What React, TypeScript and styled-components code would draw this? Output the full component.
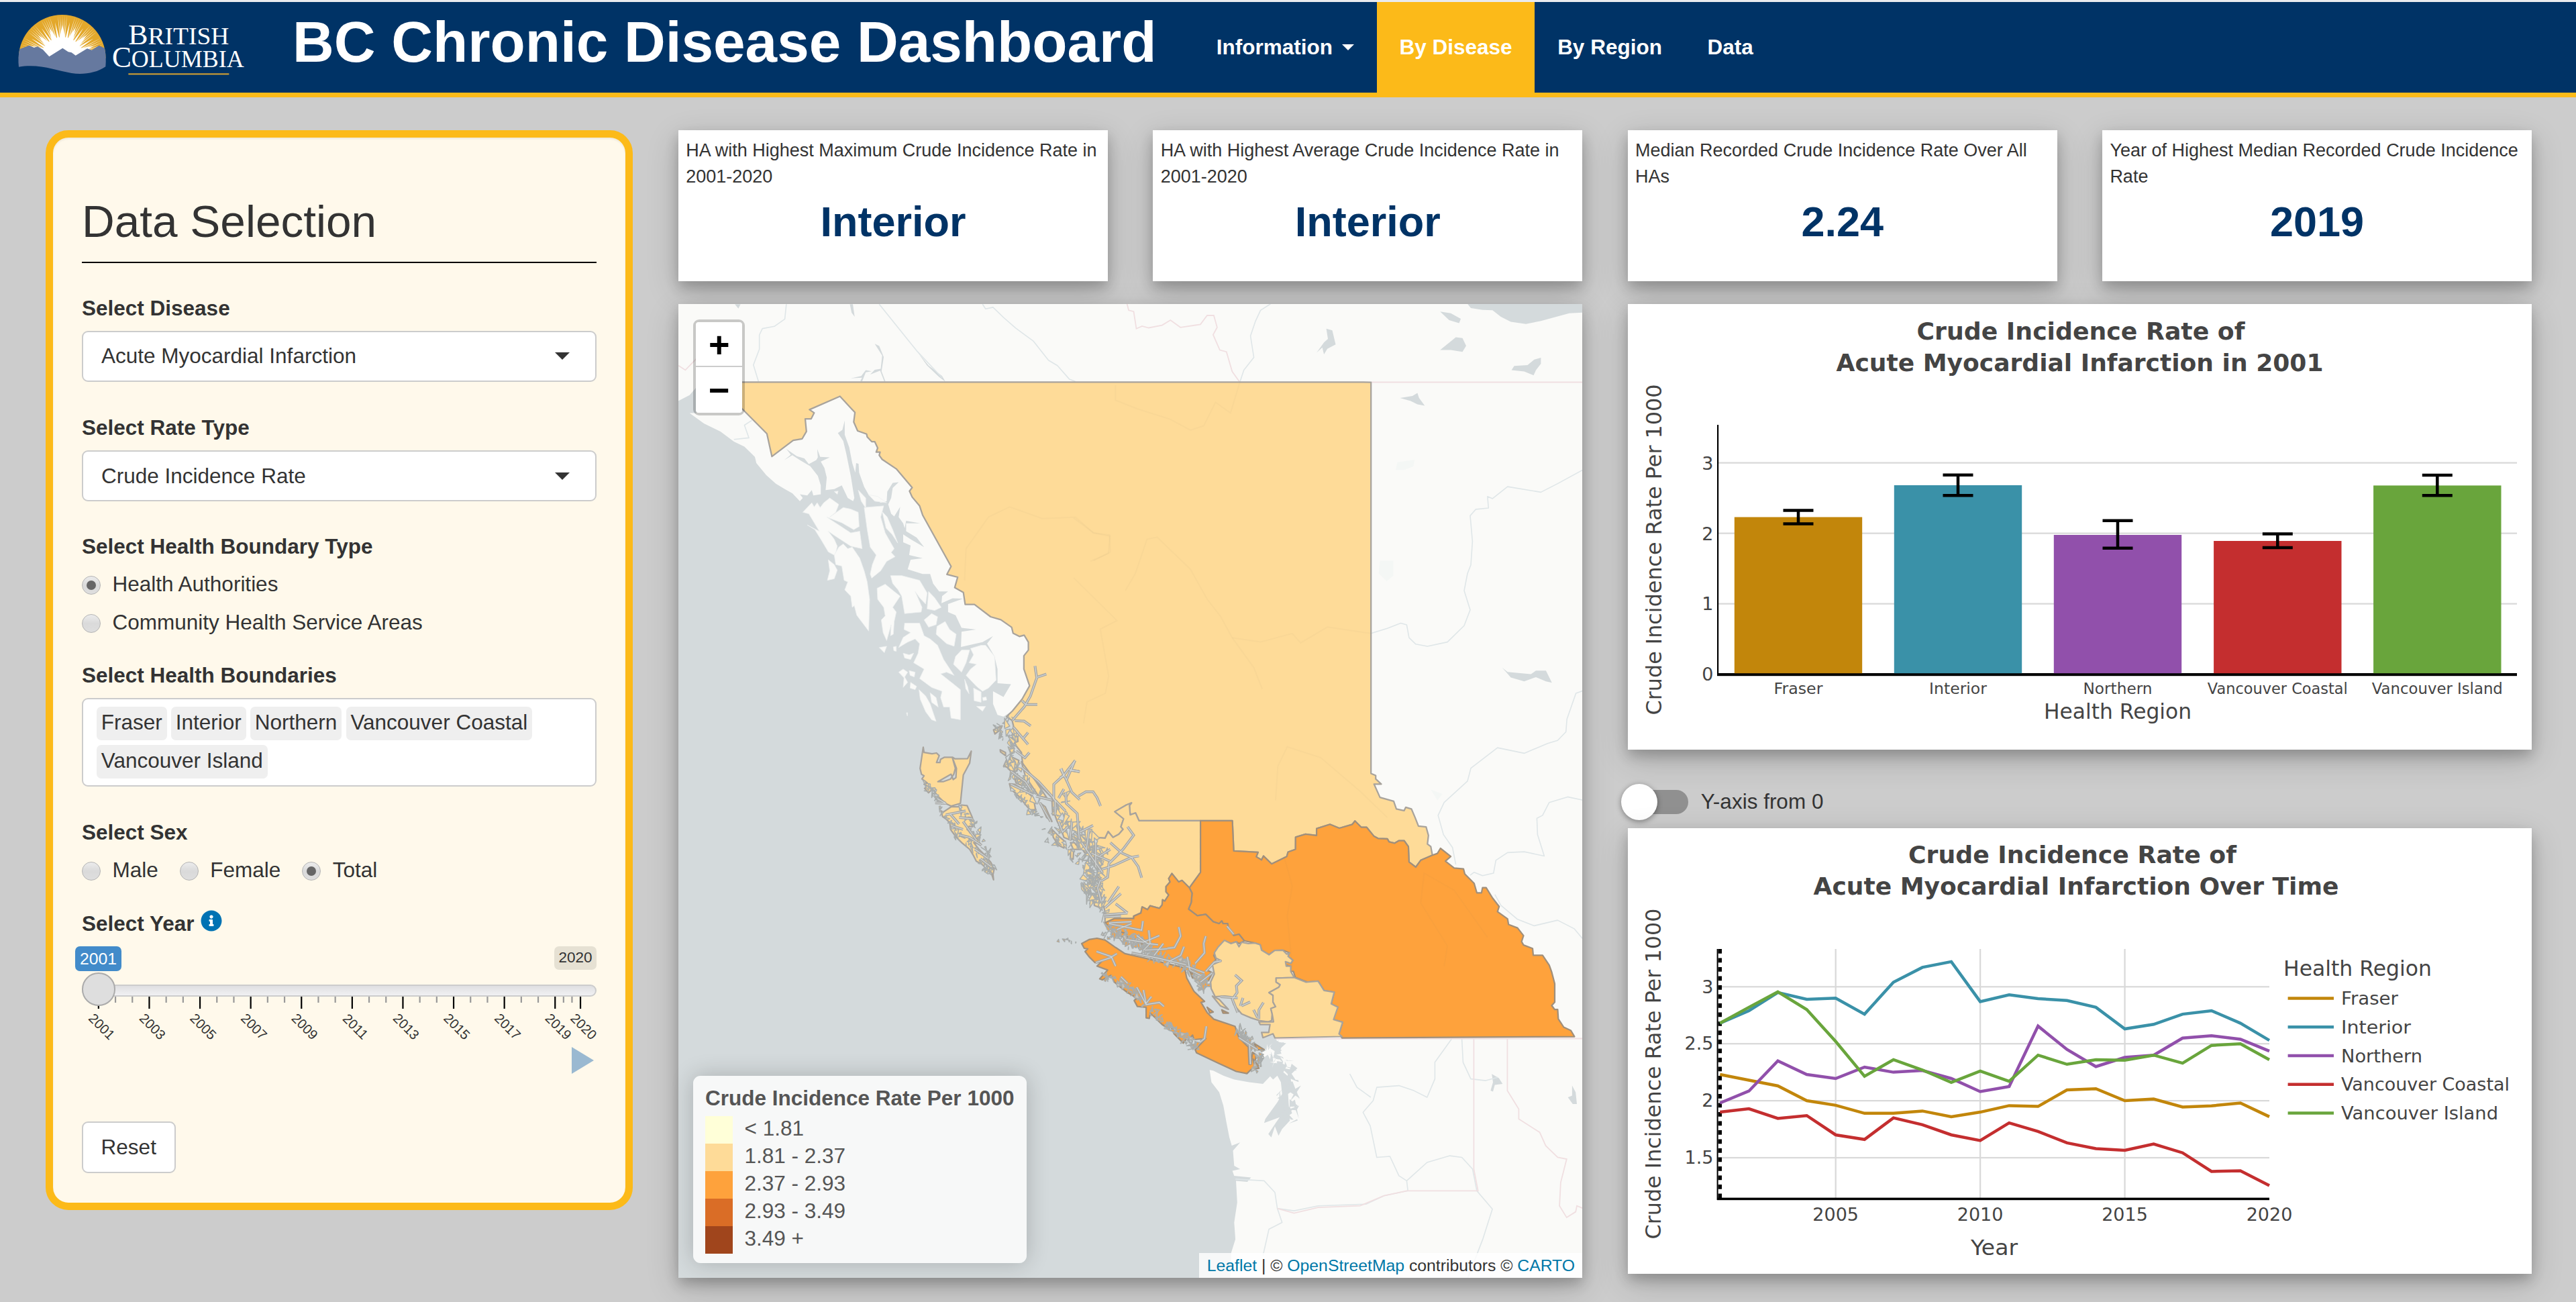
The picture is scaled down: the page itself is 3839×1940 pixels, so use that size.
import React from 'react';
import styled, { createGlobalStyle } from 'styled-components';
import { FaInfoCircle } from 'react-icons/fa';

const GlobalStyle = createGlobalStyle`
  * { box-sizing: border-box; }
  html, body { margin: 0; padding: 0; }
  body {
    background: #cccccc;
    color: #333333;
    font-family: "Liberation Sans", Arial, sans-serif;
    font-size: 31.5px;
    line-height: 45px;
    overflow: hidden;
  }
`;

const Page = styled.div`
  width: 3839px;
  height: 1940px;
  overflow: hidden;
  background: #cccccc;
`;

/* ---------- header ---------- */

const Header = styled.header`
  display: flex;
  height: 145px;
  border-top: 3px solid #e9ebee;
  border-bottom: 7px solid #fcba19;
  background: #003366;
  color: #ffffff;
`;

const LogoBox = styled.div`
  width: 400px;
  height: 135px;
`;

const Title = styled.h1`
  margin: 0;
  width: 1379px;
  padding-left: 36px;
  font-size: 85.5px;
  line-height: 120px;
  font-weight: 700;
  white-space: nowrap;
`;

const Nav = styled.nav`
  display: flex;
  height: 135px;
`;

const NavLink = styled.a<{ $active?: boolean }>`
  display: flex;
  align-items: center;
  gap: 14px;
  padding: 0 33.75px;
  font-weight: 700;
  white-space: nowrap;
  background: ${(p) => (p.$active ? '#fcba19' : 'transparent')};
`;

const Caret = styled.span<{ $size: number; $color: string }>`
  width: 0;
  height: 0;
  border-left: ${(p) => p.$size}px solid transparent;
  border-right: ${(p) => p.$size}px solid transparent;
  border-top: ${(p) => p.$size}px solid ${(p) => p.$color};
`;

/* ---------- layout ---------- */

const Body = styled.div`
  display: flex;
  align-items: flex-start;
  gap: 68px;
  padding: 49px 66px 0 68px;
`;

const Main = styled.main`
  flex: 0 0 2762px;
  display: flex;
  flex-direction: column;
  gap: 34px;
`;

const KpiRow = styled.div`
  display: grid;
  grid-template-columns: repeat(4, 1fr);
  gap: 67.5px;
`;

const LowerRow = styled.div`
  display: grid;
  grid-template-columns: 1fr 1fr;
  gap: 67.5px;
  align-items: start;
`;

const Card = styled.section<{ $height: number }>`
  position: relative;
  height: ${(p) => p.$height}px;
  background: #ffffff;
  box-shadow: 0 9px 18px rgba(0, 0, 0, 0.2), 0 13.5px 45px rgba(0, 0, 0, 0.19);
  & > svg { display: block; width: 100%; height: 100%; }
`;

const KpiCard = styled(Card)`
  padding: 11.25px;
`;

const KpiLabel = styled.div`
  height: 88px;
  font-size: 27px;
  line-height: 38.57px;
`;

const KpiValue = styled.div`
  color: #003366;
  font-size: 63px;
  line-height: 75px;
  font-weight: 700;
  text-align: center;
`;

const Column = styled.div`
  display: flex;
  flex-direction: column;
`;

/* ---------- sidebar ---------- */

const Sidebar = styled.aside`
  flex: 0 0 875px;
  height: 1609px;
  border: 11px solid #fcba19;
  border-radius: 34px;
  background: #fff9eb;
  box-shadow: inset 0 2px 3px rgba(0, 0, 0, 0.07);
  padding: 88px 43px 0;
`;

const SideTitle = styled.h2`
  margin: 0 0 23px;
  font-size: 67.5px;
  line-height: 74px;
  font-weight: 400;
`;

const Rule = styled.div`
  height: 2px;
  background: #000000;
`;

const Field = styled.div<{ $top: number }>`
  padding-top: ${(p) => p.$top}px;
`;

const FieldLabel = styled.div`
  display: flex;
  height: 45px;
  font-weight: 700;
  margin-bottom: 11.25px;
`;

const SelectBox = styled.div`
  display: flex;
  align-items: center;
  justify-content: space-between;
  height: 76px;
  padding: 0 38px 0 27px;
  border: 2px solid #cccccc;
  border-radius: 9px;
  background: #ffffff;
`;

const RadioStack = styled.div`
  display: flex;
  flex-direction: column;
  gap: 12px;
`;

const RadioRow = styled.div`
  display: flex;
  gap: 32px;
`;

const RadioLabel = styled.label`
  display: flex;
  align-items: center;
  gap: 17.5px;
`;

const RadioDot = styled.span<{ $on?: boolean }>`
  display: flex;
  align-items: center;
  justify-content: center;
  width: 28px;
  height: 28px;
  margin-top: 2px;
  border-radius: 50%;
  border: 1px solid #b4b4b4;
  background: linear-gradient(#ececec, #dadada 50%, #dedede);
  &::after {
    content: "";
    width: 14px;
    height: 14px;
    border-radius: 50%;
    background: ${(p) => (p.$on ? '#666666' : 'transparent')};
  }
`;

const ChipBox = styled.div`
  display: flex;
  flex-wrap: wrap;
  align-content: flex-start;
  gap: 6.5px;
  height: 132px;
  padding: 11px 20px;
  border: 2px solid #cccccc;
  border-radius: 9px;
  background: #ffffff;
`;

const Chip = styled.span`
  height: 50px;
  padding: 1px 6.75px 0;
  border-radius: 7px;
  background: #efefef;
`;

const InfoIcon = styled(FaInfoCircle)`
  width: 32px;
  height: 32px;
  margin: 2px 0 0 9px;
  color: #0072b3;
  background: radial-gradient(circle, #ffffff 50%, transparent 51%);
`;

const SliderHead = styled.div`
  display: flex;
  justify-content: space-between;
  align-items: flex-start;
  height: 57px;
`;

const SliderNow = styled.span`
  margin-left: -10px;
  padding: 0 7px;
  border-radius: 7px;
  background: #428bca;
  color: #ffffff;
  font-size: 24.75px;
  line-height: 37px;
`;

const SliderMax = styled.span`
  padding: 0 6.5px;
  border-radius: 7px;
  background: #e6e1d3;
  font-size: 22.5px;
  line-height: 34.5px;
`;

const Track = styled.div`
  position: relative;
  height: 18px;
  border: 2px solid #cccccc;
  border-radius: 9px;
  background: linear-gradient(#dfdfe1, #f1f1f3);
`;

const Handle = styled.span`
  position: absolute;
  left: -2px;
  top: -20px;
  width: 49.5px;
  height: 49.5px;
  border: 2px solid #ababab;
  border-radius: 50%;
  background: #dedede;
`;

const Scale = styled.svg`
  display: block;
  width: 767px;
  height: 75px;
  overflow: visible;
`;

const PlayRow = styled.div`
  display: flex;
  justify-content: flex-end;
  padding-right: 4px;
`;

const Play = styled.span`
  border-left: 33px solid #9ab9d1;
  border-top: 20px solid transparent;
  border-bottom: 20px solid transparent;
`;

const ResetButton = styled.button`
  margin-top: 71px;
  width: 139.5px;
  height: 76.5px;
  border: 2px solid #cccccc;
  border-radius: 9px;
  background: #ffffff;
  color: #333333;
  font: 400 31.5px "Liberation Sans", Arial, sans-serif;
`;

/* ---------- map ---------- */

const ZoomControl = styled.div`
  position: absolute;
  left: 22px;
  top: 22.5px;
  width: 76.5px;
  border: 4.5px solid rgba(0, 0, 0, 0.2);
  border-radius: 9px;
  background-clip: padding-box;
`;

const ZoomKey = styled.div<{ $last?: boolean }>`
  height: 67.5px;
  background: #ffffff;
  border-bottom: ${(p) => (p.$last ? 'none' : '2px solid #cccccc')};
  border-radius: ${(p) => (p.$last ? '0 0 4px 4px' : '4px 4px 0 0')};
  color: #000000;
  font-size: 54px;
  line-height: ${(p) => (p.$last ? 68 : 66)}px;
  padding-left: 1px;
  font-weight: 700;
  text-align: center;
`;

const Legend = styled.div`
  position: absolute;
  left: 22px;
  bottom: 22px;
  width: 497px;
  height: 279px;
  padding: 11px 18px;
  border-radius: 11px;
  background: rgba(255, 255, 255, 0.8);
  box-shadow: 0 0 34px rgba(0, 0, 0, 0.2);
  color: #555555;
`;

const LegendTitle = styled.div`
  height: 49px;
  font-weight: 700;
  white-space: nowrap;
`;

const LegendRow = styled.div`
  display: flex;
  gap: 18px;
  height: 41px;
  line-height: 37px;
`;

const Swatch = styled.span<{ $color: string }>`
  width: 40.5px;
  height: 41px;
  background: ${(p) => p.$color};
`;

const Attribution = styled.div`
  position: absolute;
  right: 0;
  bottom: 0;
  height: 37px;
  padding: 0 11.25px;
  background: rgba(255, 255, 255, 0.8);
  font-size: 24.75px;
  line-height: 37px;
  white-space: nowrap;
`;

const MapLink = styled.a`
  color: #0078a8;
`;

/* ---------- toggle ---------- */

const ToggleRow = styled.div`
  display: flex;
  align-items: center;
  height: 117px;
  padding-top: 38px;
`;

const ToggleTrack = styled.span`
  display: flex;
  align-items: center;
  width: 90px;
  height: 36px;
  margin-right: 19px;
  border-radius: 18px;
  background: #909090;
`;

const ToggleKnob = styled.span`
  flex: none;
  width: 54px;
  height: 54px;
  margin-left: -9.5px;
  border-radius: 50%;
  background: #ffffff;
  box-shadow: 0 2px 9px rgba(0, 0, 0, 0.4);
`;

/* ---------- logo ---------- */

const polar = (r: number, deg: number) => {
  const a = (deg * Math.PI) / 180;
  return `${(279 + r * Math.cos(a)).toFixed(1)},${(262 - r * Math.sin(a)).toFixed(1)}`;
};
const wedge = (deg: number, half: number, r0: number, r1: number) =>
  `${polar(r0, deg - half)} ${polar(r1, deg)} ${polar(r0, deg + half)}`;

const FANS = [22, 44, 67, 90, 113, 136, 158];
const SPIKES = [33, 55.5, 78.5, 101.5, 124.5, 147];

const Logo = () => (
  <svg width="400" height="135" viewBox="0 9 1200 405">
    <defs>
      <clipPath id="dome"><path d="M83,261 A195,195 0 0 1 473,261 Z" /></clipPath>
    </defs>
    <g clipPath="url(#dome)">
      <rect x="80" y="60" width="400" height="205" fill="#e3a82b" />
      <circle cx="279" cy="262" r="96" fill="#fff" />
      {FANS.map((f) => (
        <g key={f}>
          <polygon points={wedge(f, 8, 92, 150)} fill="#fff" />
          {[-6, -3, 0, 3, 6].map((d) => (
            <polygon key={d} points={wedge(f + d, 1.7, 92, 195)} fill="#fff" opacity="0.8" />
          ))}
        </g>
      ))}
      {SPIKES.map((s) => <polygon key={s} points={wedge(s, 3, 92, 166)} fill="#fff" />)}
    </g>
    <path d="M88,220 L130,203 L152,213 L168,208 L192,222 L220,253 L280,215 L305,232 L320,235 L338,248 L390,217 L410,224 L443,203 L468,216 Q476,256 472,298 C430,328 370,334 320,327 C250,316 180,284 84,299 Q79,256 88,220 Z" fill="#66799f" />
    <g fill="#fff" fontFamily='"Liberation Serif", serif'>
      <text x="574" y="199" textLength="450" lengthAdjust="spacingAndGlyphs" fontSize="106"><tspan fontSize="124">B</tspan>RITISH</text>
      <text x="501" y="299" textLength="590" lengthAdjust="spacingAndGlyphs" fontSize="108"><tspan fontSize="130">C</tspan>OLUMBIA</text>
    </g>
    <rect x="574" y="328" width="450" height="6" fill="#d9a331" />
  </svg>
);

/* ---------- map geometry ---------- */

type Sheet = [number, number, number, number];

const A: Sheet = [1000, 440, 2.24, 2.1189];
const B: Sheet = [1600, 440, 2.0103, 1.568];
const C: Sheet = [1000, 1150, 1.12, 2.0103];
const D: Sheet = [1370, 1050, 2.529, 2.529];

const on = (s: Sheet, list: string) =>
  list.trim().split(/\s+/).map((p) => {
    const [x, y] = p.split(',').map(Number);
    return `${(s[0] + x / s[2]).toFixed(1)},${(s[1] + y / s[3]).toFixed(1)}`;
  }).join(' ');

const ALASKA_COAST = on(A, `25,333 62,315 85,290 85,372 62,372 110,405 165,430 210,462 245,478 280,510 285,530 318,568 350,595 380,612 405,625
 430,650 440,640 430,628 455,632 470,615 475,632 500,628 500,600 490,570 465,540 430,520 405,505 378,520 400,503 385,485 420,508 445,515 460,533 485,520 490,512
 488,485 498,510 530,512 500,525 512,545 520,575 516,615 545,612 570,600 590,640 608,650 612,640 600,570 585,500 575,460 557,435 572,425 580,395 580,440
 595,480 605,530 615,560 618,530 626,532 628,560 645,605 660,630 700,655 720,650 722,620 740,592 760,590 740,608 735,640 725,660 735,690
 745,698 765,668 760,700 775,720 780,735 785,712 832,720 785,720 785,745 820,765 845,795 800,770 775,755 775,780 800,790 795,820 840,830 800,835 790,865 840,880 865,880 875,910 895,935
 925,935 905,950 903,972 940,957 975,958 925,975 925,1000 950,1010 970,1050 1018,1055 970,1062 968,1110 1040,1095 1075,1076 1055,1100
 1080,1140 1090,1180 1090,1225 1135,1228 1110,1268 1075,1250 1075,1290 1090,1325 1110,1330 1140,1312`);
const US_COAST = on(C, `1030,640 1010,800 1020,850 1028,880 1022,900 1032,915 1030,940 1042,950 1030,965 1033,1045 1020,1070 1014,1090 1008,1062 1002,1095 997,1085 1010,1050 1016,1035 990,1052
 992,1040 1012,990 1020,965 1018,930 1012,910 1005,922 1000,912 988,935 965,930 940,922 922,910 905,895 899,893 902,930 915,960 922,1000 927,1050 932,1095 936,1120 950,1110
 938,1135 940,1180 950,1190 937,1195 940,1210 968,1215 962,1228 943,1225 945,1290 940,1350 942,1400 935,1441 933,1530 0,1530`);
const OCEAN = `${ALASKA_COAST} ${on(D, '420,100 700,340 1000,700 1300,1000')} ${US_COAST} 1000,1900 1000,590`;

const ISLANDS = [
  '440,685 470,655 478,668 488,655 498,670 510,655 530,640 560,660 550,685 530,700 575,670 600,675 625,685 628,730 610,740 570,718 520,700 600,750 630,745 638,800 600,792 545,758 525,745 545,770 555,792 548,822 525,810 500,770 480,740 455,725 495,745 460,690',
  '560,795 575,785 590,800 605,795 630,830 645,870 655,905 663,960 660,1060 640,1035 620,1010 612,980 605,985 600,950 580,930 590,905 578,900 570,855 550,850 545,820',
  '525,835 545,850 555,868 545,895 522,900 530,870',
  '645,670 710,665 700,700 715,750 745,800 735,812 748,825 720,840 700,870 670,893 665,880 672,850 685,820 665,795 655,740',
  '705,683 722,700 740,740 757,782 738,755 718,735',
  '733,885 770,885 830,900 855,940 850,975 830,955 815,935 838,985 835,1000 780,1005 770,950 758,930 740,910',
  '688,925 715,912 745,935 765,950 740,985 752,1000 745,1030 742,1070 733,1075 735,1040 720,1090 708,1065 702,1025 715,1012 710,985 690,960',
  '860,935 880,955 902,985 880,995 855,990',
  '845,1025 870,1005 890,1015 885,1040 860,1048',
  '888,1045 915,1030 930,1055 952,1070 945,1108 920,1100 885,1070',
  '780,1035 830,1035 845,1075 865,1085 890,1105 910,1150 945,1200 920,1190 900,1195 940,1225 966,1245 966,1340 935,1335 930,1300 910,1300 900,1270 905,1250 870,1238 830,1210 845,1180 810,1160 825,1130 830,1100 815,1085 790,1095 760,1112 775,1080 800,1065 778,1055',
  '828,1245 850,1265 865,1290 885,1345 870,1340 850,1315 832,1275',
  '775,1130 795,1135 810,1130 800,1150 780,1145',
  '760,1190 775,1180 790,1190 780,1205 790,1222 775,1238 778,1208',
  '795,1185 815,1190 812,1205 798,1200', '800,1222 820,1235 815,1245 798,1240', '865,1255 885,1270 892,1300 870,1285',
  '985,1200 1000,1180 1020,1165 995,1160 1010,1135 1000,1115 1035,1105 1050,1105 1080,1140 1085,1215 1060,1240 1040,1250 1020,1235',
  '980,1212 990,1235 995,1258 984,1242', '1010,1240 1035,1252 1035,1285 1012,1280', '1040,1270 1052,1268 1054,1278 1042,1280', '1020,1298 1050,1298 1040,1313',
  '950,1140 970,1120 997,1120 985,1160 970,1190 943,1165',
  '625,615 650,640 650,672 635,650', '660,630 690,635 720,655 680,650', '695,1112 720,1108 712,1128', '742,1110 752,1108 752,1124 744,1122', '786,1318 790,1318 789,1328', '545,620 558,618 555,628',
].map((s) => on(A, s));

const N_EDGE = on(D, '660,500 700,503 712,478 730,500 752,488 768,470 760,460 770,430 737,403 780,378 800,370 792,380 795,415 815,408 828,437 1060,437');
const N_EAST = on(D, '1180,437 1185,551 1277,556 1270,573 1290,585 1297,570 1328,600 1385,572 1390,555 1418,545');
const ROCKY = on(B, '665,1266 695,1259 728,1262 728,1246 768,1236 796,1245 835,1236 843,1228 862,1243 878,1243 900,1264 912,1269 940,1270 945,1277 962,1280 975,1274 990,1274 1003,1288 1005,1324 1025,1336 1040,1320');

const reverse = (pts: string) => pts.split(' ').reverse().join(' ');

const NORTHERN = [
  on(A, `149,274 236,357 320,437 337,509 408,458 438,453 452,430 448,390 468,390 478,371 462,361 564,319 614,370 610,400 623,428 653,438
 655,447 670,462 680,462 690,482 685,495 698,495 695,505 705,518 752,548 805,607 796,618 805,637 830,665 840,694 935,856 921,881 957,890
 947,923 976,938 982,976 1013,976 1067,1015 1101,1024 1137,1048 1142,1067 1163,1077 1179,1073 1193,1095 1193,1120 1178,1138 1178,1180
 1197,1233 1172,1275 1140,1312 1120,1330`),
  on(D, '329,45 350,60 355,80 350,120 365,155 385,180 390,225 440,290 500,350 505,400 520,440 535,470 545,500 570,510 590,500 605,530 625,560 660,530'),
  N_EDGE, N_EAST, ROCKY,
  on(B, '1075,1308 1070,1288 1060,1282 1063,1262 1056,1242 1033,1240 1023,1220 1012,1200 995,1196 990,1204 967,1200 959,1182 918,1173 900,1142 922,1142 905,1130 905,1122 891,1117 891,203'),
].join(' ');

const VC_TOP = on(D, '1018,690 990,662 978,668 952,636 940,655 945,668 930,685 930,705 940,717 925,740 917,735 915,755 905,767 870,758 860,772 840,762 835,785 808,797 808,806 735,806 700,822');
const VC_EAST = on(D, '1018,690 1028,710 1025,745 1015,770 1048,795 1080,790 1108,818 1130,825 1140,815 1145,825 1162,825 1165,840 1185,870 1205,865 1225,890');
const CENTRAL = [N_EDGE, on(D, '1060,632'), VC_TOP, on(D, '700,780 690,740 683,715 683,660 665,640 645,580 640,520')].join(' ');
const COASTAL = [VC_EAST, on(D, `1205,900 1195,893 1175,900 1150,890 1120,925 1110,945 1118,960 1085,1000 1105,1010 1090,1040 1060,1045 1040,1030 1005,985 940,965 900,955 870,925 835,905 800,890 750,865 720,840`), reverse(VC_TOP)].join(' ');
const INTERIOR = [
  on(D, '1060,437'), N_EAST, ROCKY,
  on(B, `1075,1308 1090,1304 1099,1292 1130,1311 1114,1322 1140,1338 1168,1340 1172,1352 1200,1374 1208,1396 1222,1396 1225,1384 1236,1384 1255,1408
 1275,1428 1270,1440 1300,1457 1303,1470 1330,1478 1348,1496 1342,1510 1348,1518 1375,1526 1377,1542 1405,1542 1425,1565`),
  on(C, '1470,600 1475,635 1475,690 1470,700 1475,712 1480,712 1481,740 1490,765 1502,775 1508,793 1120,797 1115,785 1121,750 1106,742 1106,720 1113,705 1102,695 1107,660 1090,655 1080,627 1062,630 1042,616'),
  on(D, '1410,1005 1398,1005 1400,985 1380,980 1380,968 1400,975 1408,963 1390,948 1395,935 1370,925 1340,926 1318,942 1290,925 1285,905 1265,898'),
  reverse(VC_EAST), on(D, '1060,632'),
].join(' ');
const LOWER_MAINLAND = on(D, `1150,888 1175,900 1195,893 1205,912 1215,895 1240,900 1265,898 1285,905 1290,925 1318,942 1340,926 1370,925 1385,940 1395,935 1390,948
 1408,963 1400,975 1380,968 1383,985 1400,985 1400,1005 1413,1028 1345,1030 1345,1045 1360,1055 1355,1065 1318,1085 1333,1095 1333,1120 1343,1138 1325,1145
 1330,1165 1328,1190 1315,1195 1280,1190 1250,1180 1215,1165 1185,1130 1175,1100 1150,1098 1115,1100 1100,1070 1098,1045 1112,1015 1105,980 1138,965 1118,955 1112,935 1125,915`);
const FRASER = [
  on(D, '1345,1030 1413,1028'),
  on(C, '1060,630 1080,627 1090,655 1107,660 1102,695 1113,705 1106,742 1121,750 1115,785 1120,793 1008,797'),
  on(D, '1333,1240 1295,1255 1290,1235 1317,1235 1322,1205 1285,1205 1280,1195 1335,1195 1330,1165 1325,1145 1343,1138 1333,1120 1333,1095 1318,1085 1355,1065 1360,1055 1345,1045'),
].join(' ');
const ISLAND = on(D, `612,900 640,885 670,880 700,887 740,915 775,938 850,955 1000,992 1008,1030 1035,1080 1075,1118 1062,1122 1085,1160 1110,1185 1190,1212 1205,1255 1240,1290 1243,1355 1250,1355 1256,1310
 1270,1320 1265,1345 1280,1370 1250,1375 1235,1390 1195,1382 1125,1350 1045,1312 1040,1300 1080,1258 1035,1262 1030,1245 1015,1262 1008,1258 995,1275 960,1240 950,1215 930,1215 915,1205 890,1180 870,1162
 867,1182 855,1180 855,1140 822,1137 810,1115 820,1105 785,1085 755,1062 735,1045 722,1020 690,1037 680,1033 710,1000 670,985 690,965 662,972 640,950 625,930 635,920 622,918`);
const HAIDA = [
  '15,160 18,180 48,185 65,182 75,192 65,218 78,218 80,206 95,198 125,198 135,204 182,203 196,175 190,220 166,265 155,372 120,382 98,372 70,345 50,318 35,332 20,315 32,308 18,300 30,295 10,280 18,268 8,262 3,240 12,180',
  '125,200 140,240 138,275 128,282 120,262 70,290 90,290 118,280 130,262 136,240',
  '90,405 120,385 145,385 160,378 180,380 200,425 200,460 188,458 180,470 205,490 215,500 230,525 205,520 225,545 250,570 270,595 282,620 278,640 280,660 270,630 250,615 235,600 215,590 205,570 190,545 160,520 140,500 125,480 118,470 115,445 100,430 88,422 82,400',
].map((s) => on(D, s));

const OUTER_ISLES = [
  '340,298 360,300 400,325 430,350 438,395 418,398 395,370 380,350 345,318', '500,470 525,495 548,515 545,540 525,530 505,500',
  '330,205 350,198 375,210 368,250 345,250 330,235 318,232', '305,170 325,180 325,192 306,178', '280,95 300,85 312,80 305,95 285,110',
  '350,120 370,120 372,138 355,145', '655,722 675,725 682,765 660,757', '570,520 585,520 605,545 580,545', '360,280 378,280 400,300 395,308 365,295',
  '455,370 475,385 500,440 480,425', '500,360 520,370 520,415 503,415', '570,545 582,545 580,582 570,580', '385,215 440,290 480,350 450,345 400,270',
].map((s) => on(D, s));
const GULF_ISLES = ['1085,1140 1108,1158 1095,1162', '1140,1150 1165,1162 1145,1162', '735,850 780,862 785,880 750,870', '805,880 850,895 840,900', '1020,1005 1040,1020 1030,1030', '1260,1275 1300,1300 1275,1300', '1258,1335 1278,1360 1265,1372'].map((s) => on(D, s));
const BOWEN = on(D, '1105,1098 1130,1110 1165,1148 1135,1135');

const FJORDS = [
  on(A, '1215,1170 1221,1208 1200,1265 1180,1298 1140,1342'), on(A, '1253,1196 1222,1206'), on(A, '1223,1292 1185,1292 1172,1280'), on(A, '1300,1495 1320,1530 1348,1470 1335,1500 1362,1503'),
  ...[
    '385,235 450,290 500,345 512,362 512,415', '507,358 507,300 545,265 588,210', '535,240 545,268 530,275', '565,245 605,253', '555,285 575,330 605,358',
    '600,345 628,328 655,328 670,350 683,382', '512,360 550,400', '552,330 554,372 595,410 603,505', '545,318 525,352', '575,442 568,510', '455,370 495,440',
    '355,85 410,150', '360,60 395,62 420,80', '410,105 393,125', '365,175 398,200 415,180', '345,300 430,340', '785,460 808,492 768,545 715,598 710,650 685,665',
    '720,520 765,560 800,575 828,570', '690,620 735,605 800,575', '800,575 825,610 838,652', '612,520 690,632', '640,470 630,545', '665,520 665,610', '650,560 720,590', '605,480 655,455', '720,545 680,570',
    '712,745 752,685', '700,765 760,712', '740,750 785,785', '695,792 785,785', '700,800 760,797', '683,660 672,690 685,740', '525,440 540,480 560,460', '345,250 400,290 420,320', '440,345 500,360',
    '715,825 838,850 843,815', '745,847 800,825', '715,822 800,818', '780,885 845,895 905,870', '865,850 870,900 845,925', '820,870 860,900 900,905', '935,918 962,915 985,872 978,838', '850,925 935,920',
    '1040,975 1075,935 1072,900 1080,872', '1080,1005 1112,970 1138,965', '885,945 920,900', '940,968 985,945 998,912', '800,935 900,955 1005,980', '1010,950 1020,1000 1060,1020', '1005,985 1075,1010', '1105,1010 1060,1045', '1160,835 1185,865',
    '668,930 725,950 745,938', '665,972 725,952 740,985', '845,1075 855,1130 905,1122 922,1137', '820,1065 855,1130', '875,1100 855,1125', '1082,1212 1075,1258 1060,1270', '760,1025 785,1050',
    '1245,1280 1248,1355', '1205,1255 1275,1300', '1190,1018 1215,1040 1195,1060 1198,1085 1180,1110 1200,1160', '1220,1105 1210,1135', '1247,1120 1215,1135', '1297,1122 1280,1150 1280,1185', '1260,1150 1275,1180', '1135,1100 1200,1105',
    '100,415 175,400', '150,425 200,430', '120,455 165,470', '165,440 215,510', '150,490 190,500', '60,370 100,372 70,355', '115,410 150,450', '190,500 235,530', '210,545 260,580', '230,580 270,610',
  ].map((s) => on(D, s)),
];

// Deterministic pseudo-random scatter of skerries along the outer coast.
const scatter = (seed: number, list: string, count: number, spread: number, size: number) => {
  let n = seed;
  const rnd = () => { n = (n * 16807) % 2147483647; return n / 2147483647; };
  const g = on(D, list).split(' ').map((p) => p.split(',').map(Number));
  const out: string[] = [];
  for (let i = 0; i < count; i += 1) {
    const t = rnd() * (g.length - 1);
    const k = Math.floor(t);
    const f = t - k;
    const x = g[k][0] + (g[k + 1][0] - g[k][0]) * f + (rnd() - 0.5) * spread;
    const y = g[k][1] + (g[k + 1][1] - g[k][1]) * f + (rnd() - 0.5) * spread;
    const pt = () => `${(x + (rnd() - 0.5) * size).toFixed(1)},${(y + (rnd() - 0.5) * size * 1.3).toFixed(1)}`;
    out.push(`${pt()} ${pt()} ${pt()}`);
  }
  return out;
};

const SKERRIES = [
  ...scatter(11, '340,50 355,130 345,220 380,290 450,350', 60, 14, 13),
  ...scatter(23, '300,90 310,125', 12, 10, 8),
  ...scatter(37, '345,310 400,380 460,430', 22, 8, 8),
  ...scatter(41, '480,480 540,530 620,600', 24, 14, 8),
  ...scatter(53, '520,380 560,480 630,500 650,580 645,680 660,720', 120, 24, 18),
  ...scatter(67, '690,550 660,640 650,700 700,790', 60, 16, 14),
  ...scatter(71, '25,290 60,350 90,410 150,490 240,590 280,650', 60, 9, 10),
  ...scatter(83, '150,400 200,450 235,540 270,600', 36, 14, 9),
];
const SOUTH_SKERRIES = [
  ...scatter(97, '705,850 760,870 840,910 900,950', 90, 14, 12),
  ...scatter(101, '840,880 870,940 1000,980 1060,1040 1080,1060', 70, 12, 13),
  ...scatter(113, '690,1020 780,1060 840,1110 930,1200 1000,1260 1040,1290', 90, 9, 9),
  ...scatter(127, '1200,1220 1240,1260 1290,1320 1270,1370', 50, 9, 9),
  ...scatter(131, '525,885 600,895', 6, 3, 4),
];
const SEA_BITS = [...scatter(151, '1300,1270 1370,1330 1400,1440 1390,1540', 46, 26, 22)];
const US_BITS = [...scatter(163, '1300,1300 1350,1350 1370,1330', 20, 14, 14)];

const LAKES = [
  on(A, '822,178 860,222 905,255 916,273 895,258 855,222'), on(A, '680,153 695,160 710,195 703,240 716,272 712,272 698,238 665,250 680,235 700,232 705,190'),
  on(A, '600,262 635,255 650,236 670,240 650,243 638,272 632,270 638,260'), on(A, '597,28 607,28 613,68 603,55'), on(A, '213,28 232,28 225,42'),
  ...[
    '757,78 775,82 785,115 760,125 750,138 745,122 728,134 750,110 762,102', '1098,38 1130,42 1160,55 1155,65 1125,58', '1098,128 1145,98 1165,100 1176,118 1165,132 1130,128',
    '1312,175 1320,165 1360,163 1380,150 1400,146 1400,160 1385,175 1378,187 1350,178', '1170,10 1530,10 1530,40 1485,42 1400,60 1355,67 1310,62 1280,50 1255,35 1225,34 1190,30',
    '978,240 1015,235 1030,228 1035,240 1052,258 1030,255 1010,247', '1284,870 1300,880 1370,885 1385,877 1415,877 1433,905 1415,902 1385,892 1350,902 1310,893',
  ].map((s) => on(B, s)),
  on(C, '1370,905 1382,918 1388,935 1375,938 1372,958 1368,955 1372,930'), on(C, '1504,940 1510,960 1512,995 1505,995 1497,975 1504,970'),
];
const RIVERS = [
  on(A, '385,28 380,75 345,98 305,105 295,125 295,170 275,220 292,272'), on(A, '695,28 820,175 905,260'), on(A, '1040,28 1050,43 1075,38 1110,70 1150,103 1210,145 1260,205 1290,222 1330,265 1350,272'),
  on(A, '270,395 245,410 260,450 210,455'),
  ...[
    '590,20 560,35 545,60 530,95 540,145 510,175 498,203', '891,790 940,778 980,766 998,770 1005,800 1025,815 1060,820 1120,810 1170,772 1188,735 1170,690 1180,650 1190,630 1195,575 1188,515 1205,500 1243,497 1240,470 1255,475 1300,447 1400,460 1450,440 1530,406',
    '1530,923 1505,930 1478,990 1475,1020 1450,1040 1420,1047 1350,1070 1270,1057 1190,1105 1180,1135 1110,1185 1092,1215 1108,1260 1135,1290 1145,1330',
    '1530,1180 1480,1172 1425,1185 1405,1215 1388,1222 1390,1260 1410,1310 1350,1300 1300,1302 1265,1320 1258,1350 1225,1356 1200,1348 1188,1355', '1262,1400 1280,1425 1330,1458 1380,1473 1450,1460 1500,1480 1530,1508',
  ].map((s) => on(B, s)),
  ...[
    '1303,800 1275,870 1275,920 1262,975 1240,955 1215,940 1178,945 1172,985 1155,1020 1167,1060 1178,1155 1200,1152 1215,1210 1228,1225 1230,1255 1190,1270 1160,1295 1080,1300 1040,1315 1012,1308 1008,1260 990,1225 942,1220',
    '1133,905 1145,945 1168,975', '1320,800 1322,870 1335,920 1360,925 1380,915', '1228,1225 1262,1170 1300,1150 1320,1155 1338,1190 1345,1255 1371,1310 1355,1400 1330,1516', '1012,1308 1020,1350 998,1370 988,1450',
  ].map((s) => on(C, s)),
];
const BORDERS = [
  on(A, '25,222 48,236 85,200'),
  on(B, '160,20 165,35 180,38 188,78 205,72 225,76 265,70 290,58 320,75 380,68 400,47 420,47 430,75 418,92 438,128 458,132 475,178 498,203'),
  on(B, '891,203 1530,203'), on(C, '1010,800 1525,799'), on(C, '1340,800 1340,1190 1347,1255 1228,1255 1190,1270 1150,1300 1080,1305 1040,1322 1012,1308'),
  on(C, '1396,798 1396,955 1415,1010 1415,1040 1450,1080 1460,1120 1480,1155 1495,1160 1485,1230 1483,1300 1495,1335 1510,1318 1512,1300 1525,1310'),
];
const FAINT = [
  on(B, '125,210 125,245 190,265 290,290 350,315 390,305 425,250 470,275 498,203'), on(B, '0,520 60,555 108,560 110,600 60,620'), on(B, '155,690 185,650 220,570 250,565 350,640 400,710 440,750 475,800 540,870 565,920'),
  on(B, '475,800 560,810 655,790 680,812 760,775 891,790'), on(B, '605,1180 612,1100 640,1055 740,1080 860,1160 940,1220'), on(B, '0,660 130,760 80,780 105,890 95,930 40,950 30,1000'),
  on(A, '980,900 985,800 1060,700 1130,668 1240,705 1350,700 1410,750 1465,760 1460,815 1400,840'), on(B, '655,1568 640,1450 655,1380 630,1310'), on(B, '1110,1568 1120,1520 1040,1420 1050,1350 1140,1390 1240,1500'),
];
const PARKS = ['965,408 970,390 1022,384 1018,400 990,408', '918,620 958,620 958,655 938,668 914,650', '1070,1155 1105,1165 1090,1180'].map((s) => on(B, s));

const PALE = '#fedb98';
const AMBER = '#fea23c';
const EDGE = '#a8a39c';

const MapView = () => (
  <svg viewBox="1011 453 1347.25 1451" preserveAspectRatio="none">
    <rect x="1000" y="440" width="1380" height="1480" fill="#fafaf8" />
    <g fill="#f4f7f5">{PARKS.map((p) => <polygon key={p} points={p} />)}</g>
    <polygon points={OCEAN} fill="#d4dadc" />
    <g fill="#fafaf8" stroke="#eef0f0" strokeWidth="0.8">{ISLANDS.map((p) => <polygon key={p} points={p} />)}</g>
    <g fill="#d4dadc">{LAKES.map((p) => <polygon key={p} points={p} />)}{SEA_BITS.map((p) => <polygon key={p} points={p} />)}</g>
    <g fill="#fafaf8">{US_BITS.map((p) => <polygon key={p} points={p} />)}</g>
    <g fill="none" stroke="#dfe6e8" strokeWidth="1.6" strokeLinejoin="round">{RIVERS.map((p) => <polyline key={p} points={p} />)}</g>
    <g fill="none" stroke="#f0dfe1" strokeWidth="1.8">{BORDERS.map((p) => <polyline key={p} points={p} />)}</g>
    <g stroke={EDGE} strokeWidth="2.25" strokeLinejoin="round">
      <g fill={PALE}>
        <polygon points={NORTHERN} />
        <polygon points={CENTRAL} />
        <polygon points={HAIDA[0]} />
        <polygon points={HAIDA[1]} fill="#d4dadc" />
        <polygon points={HAIDA[2]} />
        {OUTER_ISLES.map((p) => <polygon key={p} points={p} />)}
      </g>
      <g fill={AMBER} stroke="#a08f7b">
        <polygon points={INTERIOR} />
        <polygon points={COASTAL} />
        <polygon points={ISLAND} />
        {GULF_ISLES.map((p) => <polygon key={p} points={p} />)}
      </g>
      <g fill={PALE}>
        <polygon points={LOWER_MAINLAND} />
        <polygon points={FRASER} />
        <polygon points={BOWEN} />
      </g>
      <g stroke="#a9adac" strokeWidth="1.5">
        {SKERRIES.map((p, i) => <polygon key={p} points={p} fill={i % 3 ? PALE : '#d4dadc'} />)}
        {SOUTH_SKERRIES.map((p, i) => <polygon key={p} points={p} fill={i % 2 ? '#c9c3b9' : AMBER} />)}
      </g>
    </g>
    <g fill="none" strokeLinejoin="miter">
      <g stroke="#a8a8a5" strokeWidth="4">{FJORDS.map((p) => <polyline key={p} points={p} />)}</g>
      <g stroke="#d4d9da" strokeWidth="1.1">{FJORDS.map((p) => <polyline key={p} points={p} />)}</g>
    </g>
    <g fill="none" stroke="#8a7a60" strokeOpacity="0.04" strokeWidth="2">{FAINT.map((p) => <polyline key={p} points={p} />)}</g>
  </svg>
);

/* ---------- charts ---------- */

const COLORS = ['#c2860b', '#3a91a8', '#9150ab', '#c42e2f', '#69a53c'];
const REGIONS = ['Fraser', 'Interior', 'Northern', 'Vancouver Coastal', 'Vancouver Island'];
const FONT = '"DejaVu Sans", Verdana, sans-serif';

interface LabelProps {
  x: number; y: number; w?: number; size: number; anchor?: 'start' | 'middle' | 'end'; bold?: boolean; turn?: boolean; children: React.ReactNode;
}
const Label = ({ x, y, w, size, anchor = 'middle', bold, turn, children }: LabelProps) => (
  <text x={x} y={y} fontSize={size} textAnchor={anchor} fontWeight={bold ? 700 : 400} fill="#444444" fontFamily={FONT}
    textLength={w} lengthAdjust="spacingAndGlyphs" transform={turn ? `rotate(-90 ${x} ${y})` : undefined}>
    {children}
  </text>
);

const BARS = [
  { mid: 2679, top: 770.5, hi: 760.5, lo: 780.4, w: 73 },
  { mid: 2917, top: 723, hi: 707.7, lo: 738.3, w: 86 },
  { mid: 3155, top: 797, hi: 775.8, lo: 816.8, w: 103 },
  { mid: 3393.3, top: 806, hi: 795.4, lo: 816, w: 209 },
  { mid: 3631.3, top: 723.4, hi: 708, lo: 738.3, w: 195 },
];

const BarChart = () => (
  <svg viewBox="2425 453 1347.25 664" preserveAspectRatio="none">
    <Label x={3100} y={506} w={489} size={36} bold>Crude Incidence Rate of</Label>
    <Label x={3098.5} y={552.7} w={726} size={36} bold>Acute Myocardial Infarction in 2001</Label>
    <Label x={2474.5} y={819} w={493} size={31.5} turn>Crude Incidence Rate Per 1000</Label>
    {[1, 2, 3].map((v) => <rect key={v} x="2559" y={1004.5 - v * 105 - 1} width="1191" height="2.25" fill="#d9d9d9" />)}
    {[0, 1, 2, 3].map((v) => <Label key={v} x={2552.5} y={1014 - v * 104.7} size={27} anchor="end">{v}</Label>)}
    <rect x="2558" y="1003" width="1192" height="4.2" fill="#000" />
    <rect x="2558" y="633" width="2.2" height="374" fill="#000" />
    {BARS.map((b, i) => (
      <g key={b.mid}>
        <rect x={b.mid - 95.2} y={b.top} width="190.4" height={1003.2 - b.top} fill={COLORS[i]} />
        <path d={`M${b.mid - 22.5},${b.hi}h45M${b.mid - 22.5},${b.lo}h45M${b.mid},${b.hi}V${b.lo}`} stroke="#000" strokeWidth="4.5" fill="none" />
        <Label x={b.mid} y={1033.5} w={b.w} size={22.5}>{REGIONS[i]}</Label>
      </g>
    ))}
    <Label x={3155} y={1070.5} w={220} size={31.5}>Health Region</Label>
  </svg>
);

const SERIES = [
  [2.23, 2.18, 2.13, 2.0, 1.96, 1.89, 1.89, 1.91, 1.86, 1.9, 1.957, 1.95, 2.095, 2.105, 2.0, 2.015, 1.945, 1.955, 1.98, 1.86],
  [2.68, 2.79, 2.95, 2.89, 2.9, 2.76, 3.04, 3.17, 3.22, 2.87, 2.93, 2.895, 2.88, 2.82, 2.63, 2.67, 2.76, 2.79, 2.68, 2.53],
  [1.98, 2.085, 2.35, 2.23, 2.195, 2.295, 2.25, 2.265, 2.195, 2.08, 2.125, 2.655, 2.45, 2.3, 2.38, 2.4, 2.55, 2.57, 2.54, 2.435],
  [1.9, 1.93, 1.845, 1.87, 1.7, 1.66, 1.85, 1.79, 1.7, 1.65, 1.805, 1.73, 1.63, 1.58, 1.565, 1.62, 1.543, 1.38, 1.385, 1.255],
  [2.68, 2.82, 2.955, 2.8, 2.52, 2.215, 2.36, 2.27, 2.16, 2.26, 2.17, 2.4, 2.32, 2.36, 2.355, 2.4, 2.33, 2.485, 2.5, 2.36],
];
const KEY_WIDTHS = [85, 104, 121, 251, 234];
const yearX = (y: number) => 3381 - (2020 - y) * 43.09;
const rateY = (v: number) => 1470.3 + (3 - v) * 169.8;

const LineChart = () => (
  <svg viewBox="2425 1234 1347.25 664.4" preserveAspectRatio="none">
    <Label x={3087.5} y={1286.3} w={489} size={36} bold>Crude Incidence Rate of</Label>
    <Label x={3093} y={1333.2} w={783} size={36} bold>Acute Myocardial Infarction Over Time</Label>
    <Label x={2474.5} y={1600} w={493} size={31.5} turn>Crude Incidence Rate Per 1000</Label>
    {[1.5, 2, 2.5, 3].map((v) => (
      <g key={v}>
        <rect x="2559" y={rateY(v) - 1.1} width="822" height="2.25" fill="#d9d9d9" />
        <Label x={2552.5} y={rateY(v) + 9.3} size={27} anchor="end">{v}</Label>
      </g>
    ))}
    {[2005, 2010, 2015].map((y) => <rect key={y} x={yearX(y) - 1.1} y="1414" width="2.25" height="371" fill="#d9d9d9" />)}
    {[2005, 2010, 2015, 2020].map((y) => <Label key={y} x={yearX(y)} y={1818.8} size={27}>{y}</Label>)}
    <rect x="2558" y="1784.6" width="823" height="3.6" fill="#000" />
    <rect x="2557.6" y="1414" width="2" height="374" fill="#000" />
    <line x1="2562.3" x2="2562.3" y1="1414" y2="1785" stroke="#000" strokeWidth="5.5" strokeDasharray="6.75 6.75" />
    {[0, 1, 2, 3, 4].map((i) => (
      <g key={i}>
        <polyline points={SERIES[i].map((v, k) => `${yearX(2001 + k).toFixed(1)},${rateY(v).toFixed(1)}`).join(' ')} fill="none" stroke={COLORS[i]} strokeWidth="4.5" strokeLinejoin="miter" />
        <line x1="3408.6" x2="3477" y1={1487.4 + i * 42.8} y2={1487.4 + i * 42.8} stroke={COLORS[i]} strokeWidth="4.5" />
        <Label x={3488} y={1497.1 + i * 42.8} w={KEY_WIDTHS[i]} size={27} anchor="start">{REGIONS[i]}</Label>
      </g>
    ))}
    <Label x={3402} y={1454.4} w={221} size={31.5} anchor="start">Health Region</Label>
    <Label x={2971} y={1870.3} w={70} size={31.5}>Year</Label>
  </svg>
);

/* ---------- slider scale ---------- */

const TICKS = [2001, 2003, 2005, 2007, 2009, 2011, 2013, 2015, 2017, 2019, 2020];
const tickX = (y: number) => 24.75 + (y - 2001) * 37.8;

const SliderScale = () => (
  <Scale viewBox="0 0 767 75">
    {TICKS.map((y, i) => {
      const x = tickX(y);
      const step = i < TICKS.length - 1 ? (tickX(TICKS[i + 1]) - x) / 3 : 0;
      return (
        <g key={y}>
          <rect x={x - 1} y="0" width="2.2" height="18" fill="#000" />
          {step > 0 && [1, 2].map((k) => <rect key={k} x={x + step * k - 1} y="0" width="2.2" height="9" fill="#999" />)}
          <text x={x + 5} y={44.5} fontSize="20.25" fill="#333" textAnchor="middle" dominantBaseline="central" transform={`rotate(45 ${x + 5} 44.5)`}>{y}</text>
        </g>
      );
    })}
  </Scale>
);

const KPIS = [
  ['HA with Highest Maximum Crude Incidence Rate in 2001-2020', 'Interior'],
  ['HA with Highest Average Crude Incidence Rate in 2001-2020', 'Interior'],
  ['Median Recorded Crude Incidence Rate Over All HAs', '2.24'],
  ['Year of Highest Median Recorded Crude Incidence Rate', '2019'],
];
const LEGEND = [['#ffffd8', '< 1.81'], ['#fedb98', '1.81 - 2.37'], ['#fea23c', '2.37 - 2.93'], ['#da6d26', '2.93 - 3.49'], ['#a0451c', '3.49 +']];

export default function App() {
  return (
    <Page>
      <GlobalStyle />
      <Header>
        <LogoBox><Logo /></LogoBox>
        <Title>BC Chronic Disease Dashboard</Title>
        <Nav>
          <NavLink>Information <Caret $size={9} $color="#ffffff" /></NavLink>
          <NavLink $active>By Disease</NavLink>
          <NavLink>By Region</NavLink>
          <NavLink>Data</NavLink>
        </Nav>
      </Header>
      <Body>
        <Sidebar>
          <SideTitle>Data Selection</SideTitle>
          <Rule />
          <Field $top={44.5}>
            <FieldLabel>Select Disease</FieldLabel>
            <SelectBox>Acute Myocardial Infarction<Caret $size={11.25} $color="#333333" /></SelectBox>
          </Field>
          <Field $top={46}>
            <FieldLabel>Select Rate Type</FieldLabel>
            <SelectBox>Crude Incidence Rate<Caret $size={11.25} $color="#333333" /></SelectBox>
          </Field>
          <Field $top={45}>
            <FieldLabel>Select Health Boundary Type</FieldLabel>
            <RadioStack>
              <RadioLabel><RadioDot $on />Health Authorities</RadioLabel>
              <RadioLabel><RadioDot />Community Health Service Areas</RadioLabel>
            </RadioStack>
          </Field>
          <Field $top={33.5}>
            <FieldLabel>Select Health Boundaries</FieldLabel>
            <ChipBox>{REGIONS.map((r) => <Chip key={r}>{r}</Chip>)}</ChipBox>
          </Field>
          <Field $top={46}>
            <FieldLabel>Select Sex</FieldLabel>
            <RadioRow>
              <RadioLabel><RadioDot />Male</RadioLabel>
              <RadioLabel><RadioDot />Female</RadioLabel>
              <RadioLabel><RadioDot $on />Total</RadioLabel>
            </RadioRow>
          </Field>
          <Field $top={34.5}>
            <FieldLabel>Select Year<InfoIcon /></FieldLabel>
            <SliderHead><SliderNow>2001</SliderNow><SliderMax>2020</SliderMax></SliderHead>
            <Track><Handle /></Track>
            <SliderScale />
            <PlayRow><Play /></PlayRow>
          </Field>
          <ResetButton>Reset</ResetButton>
        </Sidebar>
        <Main>
          <KpiRow>
            {KPIS.map(([label, value]) => (
              <KpiCard key={label} $height={225}>
                <KpiLabel>{label}</KpiLabel>
                <KpiValue>{value}</KpiValue>
              </KpiCard>
            ))}
          </KpiRow>
          <LowerRow>
            <Card $height={1451}>
              <MapView />
              <ZoomControl>
                <ZoomKey>+</ZoomKey>
                <ZoomKey $last>−</ZoomKey>
              </ZoomControl>
              <Legend>
                <LegendTitle>Crude Incidence Rate Per 1000</LegendTitle>
                {LEGEND.map(([color, text]) => <LegendRow key={text}><Swatch $color={color} />{text}</LegendRow>)}
              </Legend>
              <Attribution>
                <MapLink>Leaflet</MapLink> | © <MapLink>OpenStreetMap</MapLink> contributors © <MapLink>CARTO</MapLink>
              </Attribution>
            </Card>
            <Column>
              <Card $height={664}><BarChart /></Card>
              <ToggleRow><ToggleTrack><ToggleKnob /></ToggleTrack>Y-axis from 0</ToggleRow>
              <Card $height={664.4}><LineChart /></Card>
            </Column>
          </LowerRow>
        </Main>
      </Body>
    </Page>
  );
}
